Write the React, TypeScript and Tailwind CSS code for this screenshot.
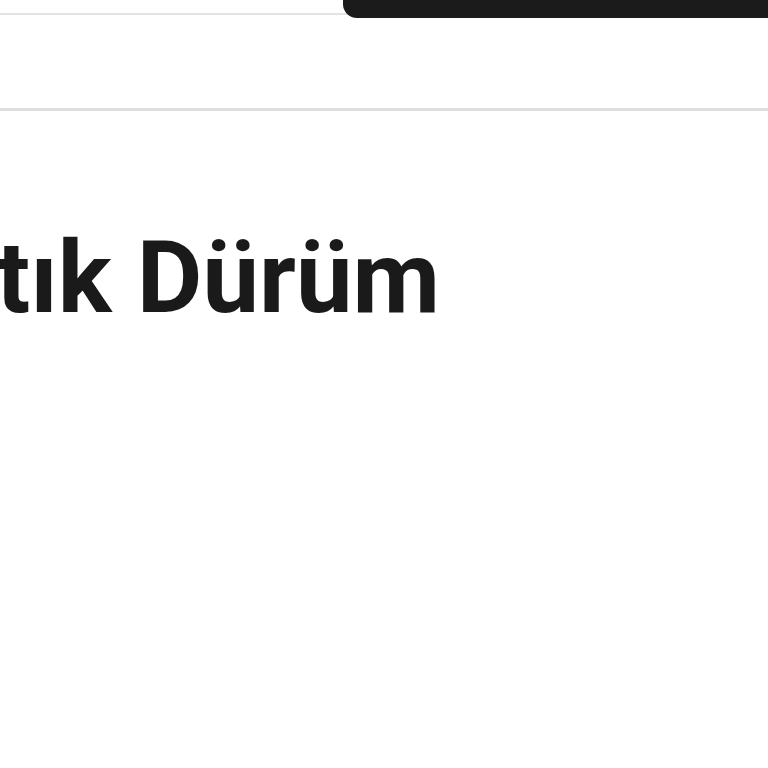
export default function App() {
  return (
    <div className="relative w-[768px] h-[768px] overflow-hidden bg-white" style={{ fontFamily: '"Roboto", sans-serif' }}>
      <div className="flex h-[18px] items-start">
        <div className="mt-[13px] h-[2px] w-[350px] bg-[#e3e3e3]" />
        <div className="-ml-[7px] h-[18px] flex-1 rounded-bl-[14px] bg-[#1b1b1b]" />
      </div>
      <div className="mt-[90px] h-[3px] w-full bg-[#dedede]" />
      <div className="mt-[116px] -ml-[4px] whitespace-nowrap text-[101px] font-bold leading-[1] text-[#1a1a1a]">
        tık Dürüm
      </div>
    </div>
  );
}
